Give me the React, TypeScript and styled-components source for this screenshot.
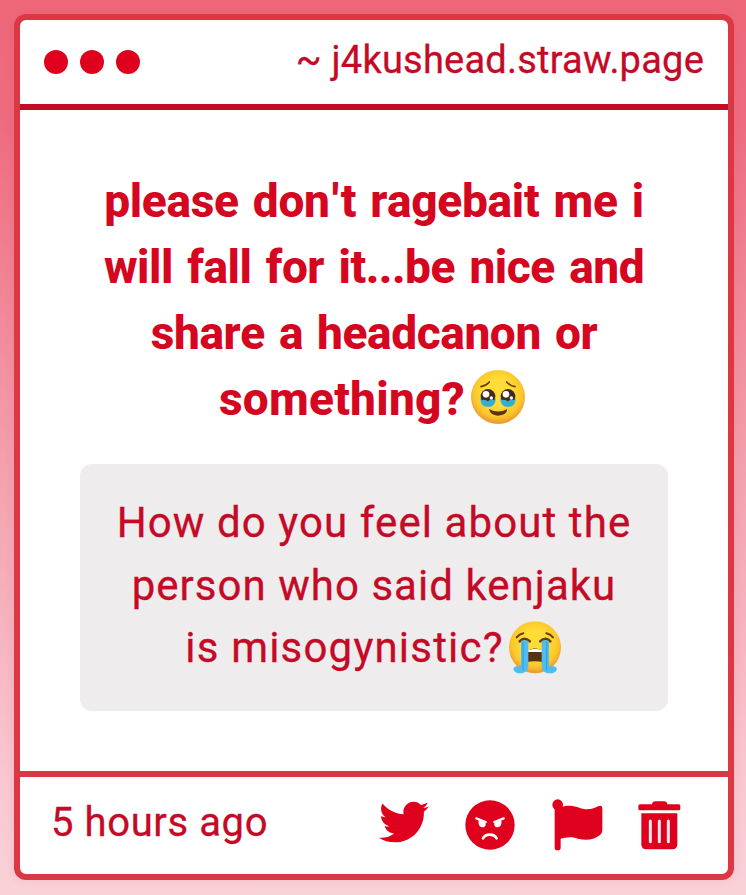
import React from "react";
import styled, { createGlobalStyle } from "styled-components";
import { FaTwitter } from "react-icons/fa";

const RED = "#de001c";
const TEXT = "#c40a26";

const GlobalStyle = createGlobalStyle`
  * { box-sizing: border-box; }
  body { margin: 0; }
`;

const Page = styled.main`
  width: 746px;
  height: 895px;
  padding: 14px 12px 15px 14px;
  background: linear-gradient(180deg, #ee6779 0%, #ee6c80 14%, #f3a0ae 52%, #f8c7d0 87%, #f9d2d8 100%);
  font-family: Roboto, "Liberation Sans", sans-serif;
  color: ${TEXT};
`;

const Card = styled.article`
  display: flex;
  flex-direction: column;
  width: 720px;
  height: 866px;
  border: 6px solid #dc3743;
  border-radius: 12px;
  background: #fff;
  box-shadow: 0 0 10px rgba(225, 60, 85, 0.12);
`;

const Header = styled.header`
  display: flex;
  align-items: center;
  justify-content: space-between;
  height: 90px;
  padding: 0 24px;
  border-bottom: 6px solid #c30c25;
`;

const Dots = styled.div`
  display: flex;
  gap: 12px;
`;

const Dot = styled.span`
  width: 24px;
  height: 24px;
  border-radius: 50%;
  background: ${RED};
`;

const Site = styled.div`
  font-size: 38px;
  line-height: 44px;
  letter-spacing: 0.22px;
  padding-bottom: 4px;
  white-space: nowrap;
  -webkit-text-stroke: 0.3px currentColor;
`;

const Body = styled.section`
  flex: 1;
  padding: 58px 60px 0;
`;

const Prompt = styled.h1`
  margin: 0;
  font-size: 46px;
  line-height: 66px;
  font-weight: 800;
  font-kerning: none;
  color: #d50620;
  text-align: center;
`;

const Line = styled.div<{ $spacing: number; $words?: number }>`
  display: flex;
  justify-content: center;
  white-space: pre;
  letter-spacing: ${(p) => p.$spacing}px;
  word-spacing: ${(p) => p.$words ?? 0}px;
`;

const Apostrophe = styled.span`
  margin: 0 2px;
`;

const Question = styled.div`
  height: 247px;
  margin-top: 32px;
  padding-top: 28px;
  border-radius: 12px;
  background: #eeecec;
  font-size: 42px;
  line-height: 62.5px;
  -webkit-text-stroke: 0.3px currentColor;
`;

const Emoji = styled.svg<{ $left: number; $top: number; $right?: number }>`
  flex: none;
  width: 56px;
  height: 56px;
  margin: ${(p) => p.$top}px ${(p) => p.$right ?? 0}px -10px ${(p) => p.$left}px;
`;

const Footer = styled.footer`
  display: flex;
  align-items: center;
  justify-content: space-between;
  height: 103px;
  padding: 0 47px 0 31px;
  border-top: 6px solid #d63944;
`;

const Time = styled.time`
  font-size: 40px;
  line-height: 46px;
  letter-spacing: 0.6px;
  padding-bottom: 6px;
  -webkit-text-stroke: 0.3px currentColor;
`;

const Actions = styled.div`
  display: flex;
  align-items: center;
  padding-bottom: 1px;
  color: ${RED};
`;

const Action = styled.button<{ $gap: number; $lift?: number }>`
  display: flex;
  margin: 0 0 0 ${(p) => p.$gap}px;
  padding: 0 0 ${(p) => p.$lift ?? 0}px;
  border: 0;
  background: none;
  color: inherit;
  svg { display: block; }
`;

const TearyFace = () => (
  <Emoji viewBox="0 0 168 168" $left={5} $top={3} $right={3} aria-label="face holding back tears">
    <defs>
      <radialGradient id="face" cx="50%" cy="42%" r="56%">
        <stop offset="0.45" stopColor="#ffdc36" />
        <stop offset="0.8" stopColor="#fbc62c" />
        <stop offset="1" stopColor="#eb9d2e" />
      </radialGradient>
    </defs>
    <circle cx="84" cy="84" r="81" fill="url(#face)" />
    <g fill="none" stroke="#693b12" strokeWidth="5" strokeLinecap="round">
      <path d="M33 53 Q49 50 58 39" />
      <path d="M110 39 Q119 50 135 53" />
    </g>
    <path d="M31 88 Q30 113 54 114 Q78 113 77 88Z M91 88 Q90 113 114 114 Q138 113 137 88Z" fill="#42b4d8" />
    <circle cx="54" cy="82" r="22" fill="#422b1c" />
    <circle cx="114" cy="82" r="22" fill="#422b1c" />
    <path d="M33 94 Q43 90 53 97 Q64 90 76 94 Q70 112 54 112 Q37 111 33 94Z M93 94 Q103 90 113 97 Q124 90 136 94 Q130 112 114 112 Q97 111 93 94Z" fill="#35adcf" />
    <g fill="#fff">
      <circle cx="48" cy="76" r="10" />
      <circle cx="108" cy="76" r="10" />
      <circle cx="64" cy="87" r="5" />
      <circle cx="124" cy="87" r="5" />
    </g>
    <path d="M57 120 Q84 135 112 120 Q110 139 84 140 Q61 139 57 120Z" fill="#5e3212" />
  </Emoji>
);

const SobbingFace = () => (
  <Emoji viewBox="0 0 168 168" $left={3} $top={3} aria-label="loudly crying face">
    <circle cx="84" cy="82" r="78" fill="url(#face)" />
    <g fill="none" stroke="#693b12" strokeLinecap="round">
      <path d="M29 52 Q37 42 49 40 M118 40 Q130 42 138 52" strokeWidth="6" />
      <path d="M38 64 Q52 49 68 64 M100 64 Q116 49 130 64" strokeWidth="8" />
    </g>
    <path d="M57 96 Q84 74 111 96 V127 Q84 120 57 127Z" fill="#593013" />
    <path d="M63 91 Q84 81 105 91 V96 H63Z" fill="#fff" />
    <g fill="#4dbdf2">
      <path d="M42 63 Q53 58 64 63 V137 Q64 157 43 160 Q25 161 20 150 Q16 137 42 138Z" />
      <path d="M104 63 Q115 58 126 63 V138 Q153 137 149 150 Q144 161 124 160 Q104 157 104 137Z" />
    </g>
    <path d="M48 65 V150 M119 65 V150" stroke="#329dd8" strokeWidth="3" />
  </Emoji>
);

const AngryIcon = () => (
  <svg width="50" height="50" viewBox="316 59 150 150">
    <circle cx="391" cy="134" r="74" fill="currentColor" />
    <g stroke="#fff" fill="none" strokeLinecap="round">
      <path d="M350 114 L378 125 M404 125 L432 114" strokeWidth="7" />
      <path d="M370 174 Q376 163 390 163 Q405 163 411 174" strokeWidth="8" />
    </g>
    <path d="M357 119 L378 127 Q380 141 367 141 Q354 139 357 119Z M425 119 L404 127 Q402 141 415 141 Q428 139 425 119Z" fill="#fff" />
  </svg>
);

const FlagIcon = () => (
  <svg width="51" height="52" viewBox="65 116 153 156" fill="currentColor">
    <circle cx="82" cy="133" r="16" />
    <path d="M73 140 H91 V262 Q91 270 82 270 Q73 270 73 262Z" />
    <path d="M89 142 C106 133 128 136 143 141 C165 150 184 149 203 138 Q216 132 216 145 V210 Q216 218 209 224 C187 241 165 240 143 235 C122 228 107 230 89 236Z" />
  </svg>
);

const TrashIcon = () => (
  <svg width="43" height="49" viewBox="323 122 129 147" fill="currentColor">
    <path d="M365 132 Q366 123 375 123 H401 Q410 123 411 132 H445 Q450 132 450 137 V145 Q450 150 445 150 H329 Q324 150 324 145 V137 Q324 132 329 132Z" />
    <path d="M333 159 H441 V252 Q441 267 426 267 H348 Q333 267 333 252Z" />
    <path d="M360 182 V244 M387 182 V244 M414 182 V244" stroke="#ffe9ed" strokeWidth="9" strokeLinecap="round" />
  </svg>
);

export default function App() {
  return (
    <>
      <GlobalStyle />
      <Page>
        <Card>
          <Header>
            <Dots><Dot /><Dot /><Dot /></Dots>
            <Site>~ j4kushead.straw.page</Site>
          </Header>
          <Body>
            <Prompt>
              <Line $spacing={-0.3} $words={3}>
                <span>please don<Apostrophe>'</Apostrophe>t ragebait me i</span>
              </Line>
              <Line $spacing={-0.5} $words={3.6}>will fall for it...be nice and</Line>
              <Line $spacing={-0.4} $words={3}>share a headcanon or</Line>
              <Line $spacing={0.25}>something?<TearyFace /></Line>
            </Prompt>
            <Question>
              <Line $spacing={1.1}>How do you feel about the</Line>
              <Line $spacing={1.03}>person who said kenjaku</Line>
              <Line $spacing={1.2}>is misogynistic?<SobbingFace /></Line>
            </Question>
          </Body>
          <Footer>
            <Time>5 hours ago</Time>
            <Actions>
              <Action $gap={0} $lift={6} aria-label="Share"><FaTwitter size={50} /></Action>
              <Action $gap={36} aria-label="Block"><AngryIcon /></Action>
              <Action $gap={37} aria-label="Report"><FlagIcon /></Action>
              <Action $gap={35} aria-label="Delete"><TrashIcon /></Action>
            </Actions>
          </Footer>
        </Card>
      </Page>
    </>
  );
}
